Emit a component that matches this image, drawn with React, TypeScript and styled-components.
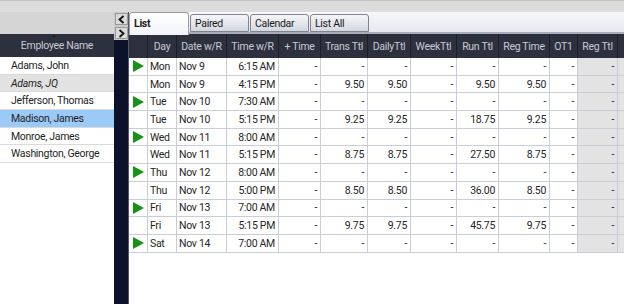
import React from 'react'
import styled, { createGlobalStyle } from 'styled-components'

const GlobalStyle = createGlobalStyle`
  html, body {
    margin: 0;
    padding: 0;
    background: #ffffff;
  }
  * {
    box-sizing: border-box;
  }
`

const Screen = styled.div`
  width: 624px;
  height: 304px;
  overflow: hidden;
  display: flex;
  flex-direction: column;
  font-family: Roboto, 'Liberation Sans', sans-serif;
  font-size: 10.5px;
  letter-spacing: -0.3px;
  color: #1e1e1e;
  background: #ffffff;
`

const TopStrip = styled.div`
  height: 12px;
  flex: none;
  background: #dcdcdc;
  border-top: 1px solid #c4c4c4;
`

const Main = styled.div`
  flex: 1;
  display: flex;
  min-height: 0;
`

// left list of employees
const LeftPanel = styled.div`
  width: 114px;
  flex: none;
  display: flex;
  flex-direction: column;
  background: #ffffff;
`

const LeftSpacer = styled.div`
  height: 22px;
  background: #d5d5d5;
`

const LeftHeader = styled.div`
  position: relative;
  height: 23px;
  background: #2d313e;
  color: #c6cad2;
  display: flex;
  align-items: center;
  justify-content: center;
`

const SortMark = styled.span`
  position: absolute;
  top: 1px;
  left: 52px;
  width: 0;
  height: 0;
  border-left: 2px solid transparent;
  border-right: 2px solid transparent;
  border-bottom: 2px solid #151820;
`

const NameRow = styled.div<{ $state?: 'alt' | 'selected' }>`
  height: 17.7px;
  display: flex;
  align-items: center;
  padding-left: 11px;
  border-bottom: 1px solid #dadada;
  white-space: nowrap;
  font-style: ${(p) => (p.$state === 'alt' ? 'italic' : 'normal')};
  background: ${(p) =>
    p.$state === 'selected' ? '#9ccaf7' : p.$state === 'alt' ? '#e2e2e2' : '#ffffff'};
`

// narrow navy strip with the two arrow buttons
const Strip = styled.div`
  width: 15px;
  flex: none;
  display: flex;
  flex-direction: column;
  background: #0b1229;
`

const StripTop = styled.div`
  height: 28px;
  padding: 1px 1px 0 1px;
  background: #c9c9c9;
  display: flex;
  flex-direction: column;
  gap: 2px;
`

const ArrowButton = styled.div`
  height: 12px;
  display: flex;
  align-items: center;
  justify-content: center;
  background: #d9d9d9;
  border: 1px solid #9a9a9a;
`

const RightPane = styled.div`
  flex: 1;
  display: flex;
  flex-direction: column;
  min-width: 0;
  border-left: 1px solid #55595f;
  margin-left: -1px;
`

const TabBar = styled.div`
  height: 23px;
  flex: none;
  display: flex;
  align-items: flex-start;
  background: linear-gradient(#f8f8fb, #e6e8ee);
  border-bottom: 3px solid #a9aeb8;
`

const Tab = styled.div<{ $active?: boolean; $w: number }>`
  width: ${(p) => p.$w}px;
  height: ${(p) => (p.$active ? 23 : 18)}px;
  margin-top: ${(p) => (p.$active ? 0 : 2)}px;
  margin-right: 1px;
  padding: ${(p) => (p.$active ? '4px 4px 0' : '2px 4px 0')};
  border: 1px solid ${(p) => (p.$active ? '#9a9ea6' : '#7f838b')};
  border-bottom: ${(p) => (p.$active ? 'none' : '1px solid #7f838b')};
  border-radius: 3px 3px 0 0;
  background: ${(p) =>
    p.$active ? 'linear-gradient(#ffffff, #f1f3f7)' : 'linear-gradient(#f6f7fa, #d3d7df)'};
  font-weight: ${(p) => (p.$active ? 700 : 400)};
  color: #1a1a1a;
  white-space: nowrap;
  position: relative;
  z-index: ${(p) => (p.$active ? 1 : 0)};
`

const columns = [19, 29, 50, 52, 42, 47, 43, 46, 42, 51, 28, 40, 40]

const Grid = styled.div`
  display: grid;
  grid-template-columns: ${columns.map((c) => c + 'px').join(' ')};
  margin-top: -1px;
`

const HeadCell = styled.div`
  height: 24px;
  display: flex;
  align-items: center;
  justify-content: center;
  background: #2d313e;
  color: #c6cad2;
  border-right: 1px solid #1b1e27;
  white-space: nowrap;
  overflow: hidden;
`

const Cell = styled.div<{ $align?: 'left' | 'right'; $shade?: boolean }>`
  height: 17.7px;
  display: flex;
  align-items: center;
  justify-content: ${(p) => (p.$align === 'left' ? 'flex-start' : 'flex-end')};
  padding: ${(p) => (p.$align === 'left' ? '0 2px' : '0 3px 0 0')};
  background: ${(p) => (p.$shade ? '#e3e3e3' : '#ffffff')};
  border-right: 1px solid #c9cdd7;
  border-bottom: 1px solid #c9cdd7;
  white-space: nowrap;
  overflow: hidden;
  color: #262626;
`

const Marker = styled.div`
  height: 17.7px;
  display: flex;
  align-items: center;
  padding-left: 4px;
  border-right: 1px solid #c9cdd7;
  border-bottom: 1px solid #c9cdd7;
`

const Blank = styled.div`
  flex: 1;
  background: #ffffff;
`

const PlayMark = () => (
  <svg width="11" height="12" viewBox="0 0 11 12">
    <polygon points="0,0 11,6 0,12" fill="#169316" />
  </svg>
)

const Chevron = ({ dir }: { dir: 'left' | 'right' }) => (
  <svg width="7" height="9" viewBox="0 0 7 9">
    <polyline
      points={dir === 'left' ? '5.5,1 1.5,4.5 5.5,8' : '1.5,1 5.5,4.5 1.5,8'}
      fill="none"
      stroke="#111"
      strokeWidth="1.8"
    />
  </svg>
)

const employees = [
  { name: 'Adams, John' },
  { name: 'Adams, JQ', state: 'alt' as const },
  { name: 'Jefferson, Thomas' },
  { name: 'Madison, James', state: 'selected' as const },
  { name: 'Monroe, James' },
  { name: 'Washington, George' }
]

const headers = ['', 'Day', 'Date w/R', 'Time w/R', '+ Time', 'Trans Ttl', 'DailyTtl', 'WeekTtl', 'Run Ttl', 'Reg Time', 'OT1', 'Reg Ttl', '']

type Punch = { start: boolean; day: string; date: string; time: string; trans: string; daily: string; run: string; reg: string }

const punches: Punch[] = [
  { start: true, day: 'Mon', date: 'Nov 9', time: '6:15 AM', trans: '-', daily: '-', run: '-', reg: '-' },
  { start: false, day: 'Mon', date: 'Nov 9', time: '4:15 PM', trans: '9.50', daily: '9.50', run: '9.50', reg: '9.50' },
  { start: true, day: 'Tue', date: 'Nov 10', time: '7:30 AM', trans: '-', daily: '-', run: '-', reg: '-' },
  { start: false, day: 'Tue', date: 'Nov 10', time: '5:15 PM', trans: '9.25', daily: '9.25', run: '18.75', reg: '9.25' },
  { start: true, day: 'Wed', date: 'Nov 11', time: '8:00 AM', trans: '-', daily: '-', run: '-', reg: '-' },
  { start: false, day: 'Wed', date: 'Nov 11', time: '5:15 PM', trans: '8.75', daily: '8.75', run: '27.50', reg: '8.75' },
  { start: true, day: 'Thu', date: 'Nov 12', time: '8:00 AM', trans: '-', daily: '-', run: '-', reg: '-' },
  { start: false, day: 'Thu', date: 'Nov 12', time: '5:00 PM', trans: '8.50', daily: '8.50', run: '36.00', reg: '8.50' },
  { start: true, day: 'Fri', date: 'Nov 13', time: '7:00 AM', trans: '-', daily: '-', run: '-', reg: '-' },
  { start: false, day: 'Fri', date: 'Nov 13', time: '5:15 PM', trans: '9.75', daily: '9.75', run: '45.75', reg: '9.75' },
  { start: true, day: 'Sat', date: 'Nov 14', time: '7:00 AM', trans: '-', daily: '-', run: '-', reg: '-' }
]

export default function App() {
  return (
    <Screen>
      <GlobalStyle />
      <TopStrip />
      <Main>
        <LeftPanel>
          <LeftSpacer />
          <LeftHeader>
            <SortMark />
            Employee Name
          </LeftHeader>
          {employees.map((e) => (
            <NameRow key={e.name} $state={e.state}>
              {e.name}
            </NameRow>
          ))}
        </LeftPanel>

        <Strip>
          <StripTop>
            <ArrowButton>
              <Chevron dir="left" />
            </ArrowButton>
            <ArrowButton>
              <Chevron dir="right" />
            </ArrowButton>
          </StripTop>
        </Strip>

        <RightPane>
          <TabBar>
            <Tab $active $w={60}>List</Tab>
            <Tab $w={59}>Paired</Tab>
            <Tab $w={59}>Calendar</Tab>
            <Tab $w={59}>List All</Tab>
          </TabBar>
          <Grid>
            {headers.map((h, i) => (
              <HeadCell key={i}>{h}</HeadCell>
            ))}
            {punches.map((p, i) => (
              <React.Fragment key={i}>
                <Marker>{p.start && <PlayMark />}</Marker>
                <Cell $align="left">{p.day}</Cell>
                <Cell $align="left">{p.date}</Cell>
                <Cell>{p.time}</Cell>
                <Cell>-</Cell>
                <Cell>{p.trans}</Cell>
                <Cell>{p.daily}</Cell>
                <Cell>-</Cell>
                <Cell>{p.run}</Cell>
                <Cell>{p.reg}</Cell>
                <Cell>-</Cell>
                <Cell $shade>-</Cell>
                <Cell $shade />
              </React.Fragment>
            ))}
          </Grid>
          <Blank />
        </RightPane>
      </Main>
    </Screen>
  )
}
